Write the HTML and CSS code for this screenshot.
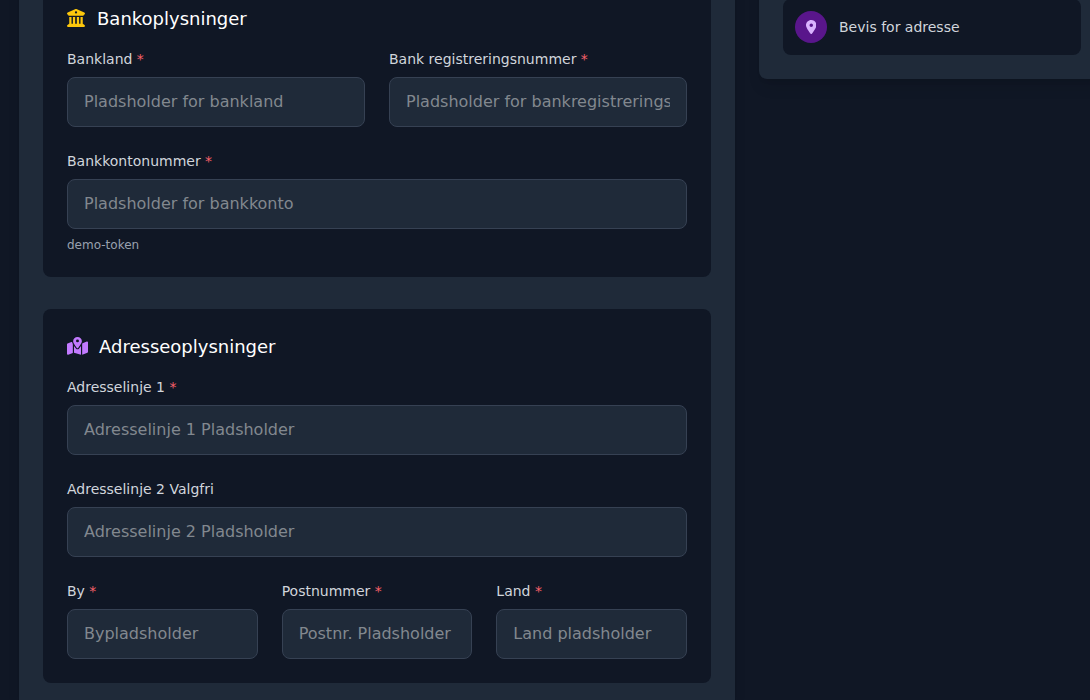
FILE: index.html
```html
<!DOCTYPE html>
<html lang="da">
<head>
<meta charset="utf-8">
<title>Bank- og adresseoplysninger</title>
<link rel="stylesheet" href="styles.css">
</head>
<body>
<div class="layout">
  <main class="panel form-panel">
    <section class="card">
      <h2 class="card-title">
        <svg class="icon icon-bank" viewBox="0 0 512 512" aria-hidden="true"><path d="M243.4 2.6l-224 96c-14 6-21.8 21-18.7 35.8S16.8 160 32 160v8c0 13.3 10.7 24 24 24H456c13.3 0 24-10.7 24-24v-8c15.2 0 28.3-10.7 31.3-25.6s-4.8-29.9-18.7-35.8l-224-96c-8-3.4-17.2-3.4-25.2 0zM128 224H64V420.3c-.6 .3-1.2 .7-1.8 1.1l-48 32c-11.7 7.8-17 22.4-12.9 35.9S17.9 512 32 512H480c14.1 0 26.5-9.2 30.6-22.7s-1.1-28.1-12.9-35.9l-48-32c-.6-.4-1.2-.7-1.8-1.1V224H384V416H344V224H280V416H232V224H168V416H128V224zM256 64a32 32 0 1 1 0 64 32 32 0 1 1 0-64z"/></svg>
        Bankoplysninger
      </h2>
      <div class="fields cols-2">
        <div class="field">
          <label class="label" for="bank-country">Bankland <span class="req">*</span></label>
          <input class="input" id="bank-country" type="text" placeholder="Pladsholder for bankland">
        </div>
        <div class="field">
          <label class="label" for="bank-reg">Bank registreringsnummer <span class="req">*</span></label>
          <input class="input" id="bank-reg" type="text" placeholder="Pladsholder for bankregistreringsnummer">
        </div>
        <div class="field wide">
          <label class="label" for="bank-account">Bankkontonummer <span class="req">*</span></label>
          <input class="input" id="bank-account" type="text" placeholder="Pladsholder for bankkonto">
          <p class="hint">demo-token</p>
        </div>
      </div>
    </section>

    <section class="card">
      <h2 class="card-title">
        <svg class="icon icon-map" viewBox="0 0 576 512" preserveAspectRatio="none" aria-hidden="true"><path d="M408 120c0 54.6-73.1 151.9-105.2 192c-7.7 9.6-22 9.6-29.6 0C241.1 271.9 168 174.6 168 120C168 53.7 221.7 0 288 0s120 53.7 120 120zm8 80.4c3.5-6.9 6.7-13.8 9.6-20.6c.5-1.2 1-2.5 1.5-3.7l116-46.4C558.9 123.4 576 135 576 152V422.8c0 9.8-6 18.6-15.1 22.3L416 503V200.4zM137.6 138.3c2.4 14.1 7.2 28.3 12.8 41.5c2.9 6.8 6.1 13.7 9.6 20.6V451.8L32.9 502.7C17.1 509 0 497.4 0 480.4V209.6c0-9.8 6-18.6 15.1-22.3l122.6-49zM327.8 332c13.9-17.4 35.7-45.7 56.2-77V504.3L192 449.4V255c20.5 31.3 42.3 59.6 56.2 77c20.5 25.6 59.1 25.6 79.6 0zM288 152a40 40 0 1 0 0-80 40 40 0 1 0 0 80z"/></svg>
        Adresseoplysninger
      </h2>
      <div class="fields">
        <div class="field">
          <label class="label" for="address-1">Adresselinje 1 <span class="req">*</span></label>
          <input class="input" id="address-1" type="text" placeholder="Adresselinje 1 Pladsholder">
        </div>
        <div class="field">
          <label class="label" for="address-2">Adresselinje 2 Valgfri</label>
          <input class="input" id="address-2" type="text" placeholder="Adresselinje 2 Pladsholder">
        </div>
        <div class="fields cols-3">
          <div class="field">
            <label class="label" for="city">By <span class="req">*</span></label>
            <input class="input" id="city" type="text" placeholder="Bypladsholder">
          </div>
          <div class="field">
            <label class="label" for="zip">Postnummer <span class="req">*</span></label>
            <input class="input" id="zip" type="text" placeholder="Postnr. Pladsholder">
          </div>
          <div class="field">
            <label class="label" for="country">Land <span class="req">*</span></label>
            <input class="input" id="country" type="text" placeholder="Land pladsholder">
          </div>
        </div>
      </div>
    </section>
  </main>

  <aside class="panel side-panel">
    <div class="doc">
      <span class="doc-icon">
        <svg class="icon icon-pin" viewBox="0 0 384 512" aria-hidden="true"><path d="M215.7 499.2C267 435 384 279.4 384 192C384 86 298 0 192 0S0 86 0 192c0 87.4 117 243 168.3 307.2c12.3 15.3 35.1 15.3 47.4 0zM192 128a64 64 0 1 1 0 128 64 64 0 1 1 0-128z"/></svg>
      </span>
      <span class="doc-name">Bevis for adresse</span>
    </div>
  </aside>
</div>
</body>
</html>
```

FILE: styles.css
```css
* {
  box-sizing: border-box;
  margin: 0;
}

body {
  height: 700px;
  overflow: hidden;
  background: #101725;
  color: #fff;
  font-family: "DejaVu Sans", sans-serif;
  font-size: 16px;
  line-height: 24px;
}

.layout {
  display: grid;
  grid-template-columns: 716px 346px;
  gap: 24px;
  align-items: start;
  margin: -43px 0 0 19px;
}

.panel {
  padding: 24px;
  background: #1f2a39;
  border-radius: 8px;
  box-shadow: 0 10px 15px -3px rgba(0, 0, 0, 0.1), 0 4px 6px -4px rgba(0, 0, 0, 0.1);
}

.form-panel {
  display: flex;
  flex-direction: column;
  gap: 32px;
  padding-bottom: 17px;
  border-radius: 8px 8px 0 0;
}

.side-panel {
  padding-top: 42px;
}

.card {
  padding: 24px;
  background: #101725;
  border-radius: 8px;
}

.card-title {
  display: flex;
  align-items: center;
  gap: 12px;
  margin-bottom: 16px;
  font-size: 18px;
  font-weight: 400;
  line-height: 28px;
}

.icon {
  display: block;
  flex: none;
  fill: currentColor;
}

.icon-bank {
  width: 18px;
  height: 18px;
  margin-bottom: 2px;
  color: #fcc70c;
}

.icon-map {
  width: 21px;
  height: 18px;
  margin: 0 -1px 2px 0;
  color: #c27aff;
}

.icon-pin {
  width: 10.5px;
  height: 14px;
}

.fields {
  display: grid;
  gap: 24px;
}

.cols-2 {
  grid-template-columns: repeat(2, minmax(0, 1fr));
}

.cols-3 {
  grid-template-columns: repeat(3, minmax(0, 1fr));
}

.wide {
  grid-column: 1 / -1;
}

.label {
  display: block;
  margin-bottom: 8px;
  color: #d1d5dc;
  font-size: 14px;
  line-height: 20px;
}

.req {
  color: #f8616a;
}

.input {
  display: block;
  width: 100%;
  height: 50px;
  padding: 11px 16px 13px;
  border: 1px solid #364153;
  border-radius: 8px;
  background: #1f2a39;
  color: #fff;
  font: inherit;
}

.input::placeholder {
  color: #82888f;
  opacity: 1;
}

.hint {
  margin-top: 8px;
  color: #99a1af;
  font-size: 12px;
  line-height: 16px;
}

.doc {
  display: flex;
  align-items: center;
  gap: 12px;
  padding: 12px;
  border-radius: 8px;
  background: #101725;
}

.doc-icon {
  display: flex;
  align-items: center;
  justify-content: center;
  width: 32px;
  height: 32px;
  border-radius: 50%;
  background: #59168b;
  color: #dab2ff;
}

.doc-name {
  color: #d1d5dc;
  font-size: 14px;
  line-height: 20px;
}
```
